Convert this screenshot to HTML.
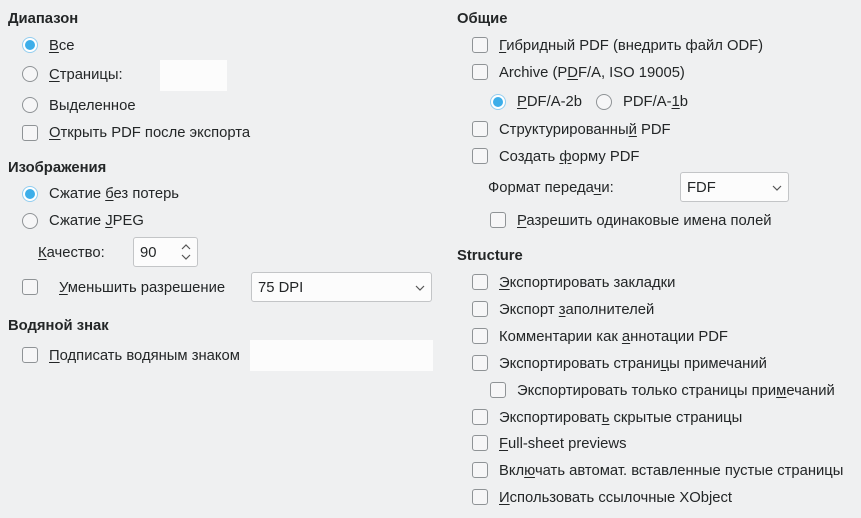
<!DOCTYPE html>
<html><head><meta charset="utf-8"><style>
body{margin:0;width:861px;height:518px;background:#eff0f1;font-family:"Liberation Sans","DejaVu Sans",sans-serif;font-size:14.8px;color:#232627;position:relative;overflow:hidden}
.a{position:absolute;white-space:nowrap;line-height:18px;margin-top:1px}
.h{font-weight:bold}
.cb{position:absolute;width:14px;height:14px;border:1px solid #8f9396;border-radius:3px;background:#f6f6f7}
.rb{position:absolute;width:14px;height:14px;border:1px solid #8f9396;border-radius:50%;background:#f6f6f7}
.rb.on{border-color:#93cef0;background:#fff}
.rb.on:after{content:"";position:absolute;left:2px;top:2px;width:10px;height:10px;border-radius:50%;background:#3daee9}
.box{position:absolute;background:#fcfcfc}
.sel{position:absolute;background:#fcfcfc;border:1px solid #c3c5c7;border-radius:3px;box-sizing:border-box}
u{text-decoration:underline;text-underline-offset:2px}
</style></head><body>
<div class="a h" style="left:8px;top:9px">Диапазон</div>
<div class="rb on" style="left:22px;top:37px"></div><div class="a" style="left:49px;top:36px"><u>В</u>се</div>
<div class="rb" style="left:22px;top:66px"></div><div class="a" style="left:49px;top:65px"><u>С</u>траницы:</div>
<div class="box" style="left:160px;top:60px;width:67px;height:31px"></div>
<div class="rb" style="left:22px;top:97px"></div><div class="a" style="left:49px;top:96px">Вы<u>д</u>еленное</div>
<div class="cb" style="left:22px;top:125px"></div><div class="a" style="left:49px;top:123px"><u>О</u>ткрыть PDF после экспорта</div>
<div class="a h" style="left:8px;top:158px">Изображения</div>
<div class="rb on" style="left:22px;top:186px"></div><div class="a" style="left:49px;top:184px">Сжатие <u>б</u>ез потерь</div>
<div class="rb" style="left:22px;top:213px"></div><div class="a" style="left:49px;top:211px">Сжатие <u>J</u>PEG</div>
<div class="a" style="left:38px;top:243px"><u>К</u>ачество:</div>
<div class="sel" style="left:133px;top:237px;width:65px;height:30px"></div>
<div class="a" style="left:140px;top:243px">90</div>
<svg class="a" style="left:180px;top:240px" width="12" height="22" viewBox="0 0 12 22"><path d="M2 8l4-4 4 4M2 14l4 4 4-4" fill="none" stroke="#555" stroke-width="1.2"/></svg>
<div class="cb" style="left:22px;top:279px"></div><div class="a" style="left:59px;top:278px"><u>У</u>меньшить разрешение</div>
<div class="sel" style="left:251px;top:272px;width:181px;height:30px"></div>
<div class="a" style="left:258px;top:278px">75 DPI</div>
<svg class="a" style="left:414px;top:282px" width="12" height="10"><path d="M2 3l4 4 4-4" fill="none" stroke="#555" stroke-width="1.2"/></svg>
<div class="a h" style="left:8px;top:316px">Водяной знак</div>
<div class="cb" style="left:22px;top:347px"></div><div class="a" style="left:49px;top:346px"><u>П</u>одписать водяным знаком</div>
<div class="box" style="left:250px;top:340px;width:183px;height:31px"></div>

<div class="a h" style="left:457px;top:9px">Общие</div>
<div class="cb" style="left:472px;top:37px"></div><div class="a" style="left:499px;top:36px"><u>Г</u>ибридный PDF (внедрить файл ODF)</div>
<div class="cb" style="left:472px;top:64px"></div><div class="a" style="left:499px;top:63px">Archive (P<u>D</u>F/A, ISO 19005)</div>
<div class="rb on" style="left:490px;top:94px"></div><div class="a" style="left:517px;top:92px"><u>P</u>DF/A-2b</div>
<div class="rb" style="left:596px;top:94px"></div><div class="a" style="left:623px;top:92px">PDF/A-<u>1</u>b</div>
<div class="cb" style="left:472px;top:121px"></div><div class="a" style="left:499px;top:120px">Структурированны<u>й</u> PDF</div>
<div class="cb" style="left:472px;top:148px"></div><div class="a" style="left:499px;top:147px">Создать <u>ф</u>орму PDF</div>
<div class="a" style="left:488px;top:178px">Формат переда<u>ч</u>и:</div>
<div class="sel" style="left:680px;top:172px;width:109px;height:30px"></div>
<div class="a" style="left:687px;top:178px">FDF</div>
<svg class="a" style="left:771px;top:182px" width="12" height="10"><path d="M2 3l4 4 4-4" fill="none" stroke="#555" stroke-width="1.2"/></svg>
<div class="cb" style="left:490px;top:212px"></div><div class="a" style="left:517px;top:211px"><u>Р</u>азрешить одинаковые имена полей</div>
<div class="a h" style="left:457px;top:246px">Structure</div>
<div class="cb" style="left:472px;top:274px"></div><div class="a" style="left:499px;top:273px"><u>Э</u>кспортировать закладки</div>
<div class="cb" style="left:472px;top:301px"></div><div class="a" style="left:499px;top:300px">Экспорт <u>з</u>аполнителей</div>
<div class="cb" style="left:472px;top:328px"></div><div class="a" style="left:499px;top:327px">Комментарии как <u>а</u>ннотации PDF</div>
<div class="cb" style="left:472px;top:355px"></div><div class="a" style="left:499px;top:354px">Экспортировать страни<u>ц</u>ы примечаний</div>
<div class="cb" style="left:490px;top:382px"></div><div class="a" style="left:517px;top:381px">Экспортировать только страницы при<u>м</u>ечаний</div>
<div class="cb" style="left:472px;top:409px"></div><div class="a" style="left:499px;top:408px">Экспортироват<u>ь</u> скрытые страницы</div>
<div class="cb" style="left:472px;top:435px"></div><div class="a" style="left:499px;top:434px"><u>F</u>ull-sheet previews</div>
<div class="cb" style="left:472px;top:462px"></div><div class="a" style="left:499px;top:461px">Вкл<u>ю</u>чать автомат. вставленные пустые страницы</div>
<div class="cb" style="left:472px;top:489px"></div><div class="a" style="left:499px;top:488px"><u>И</u>спользовать ссылочные XObject</div>
</body></html>
